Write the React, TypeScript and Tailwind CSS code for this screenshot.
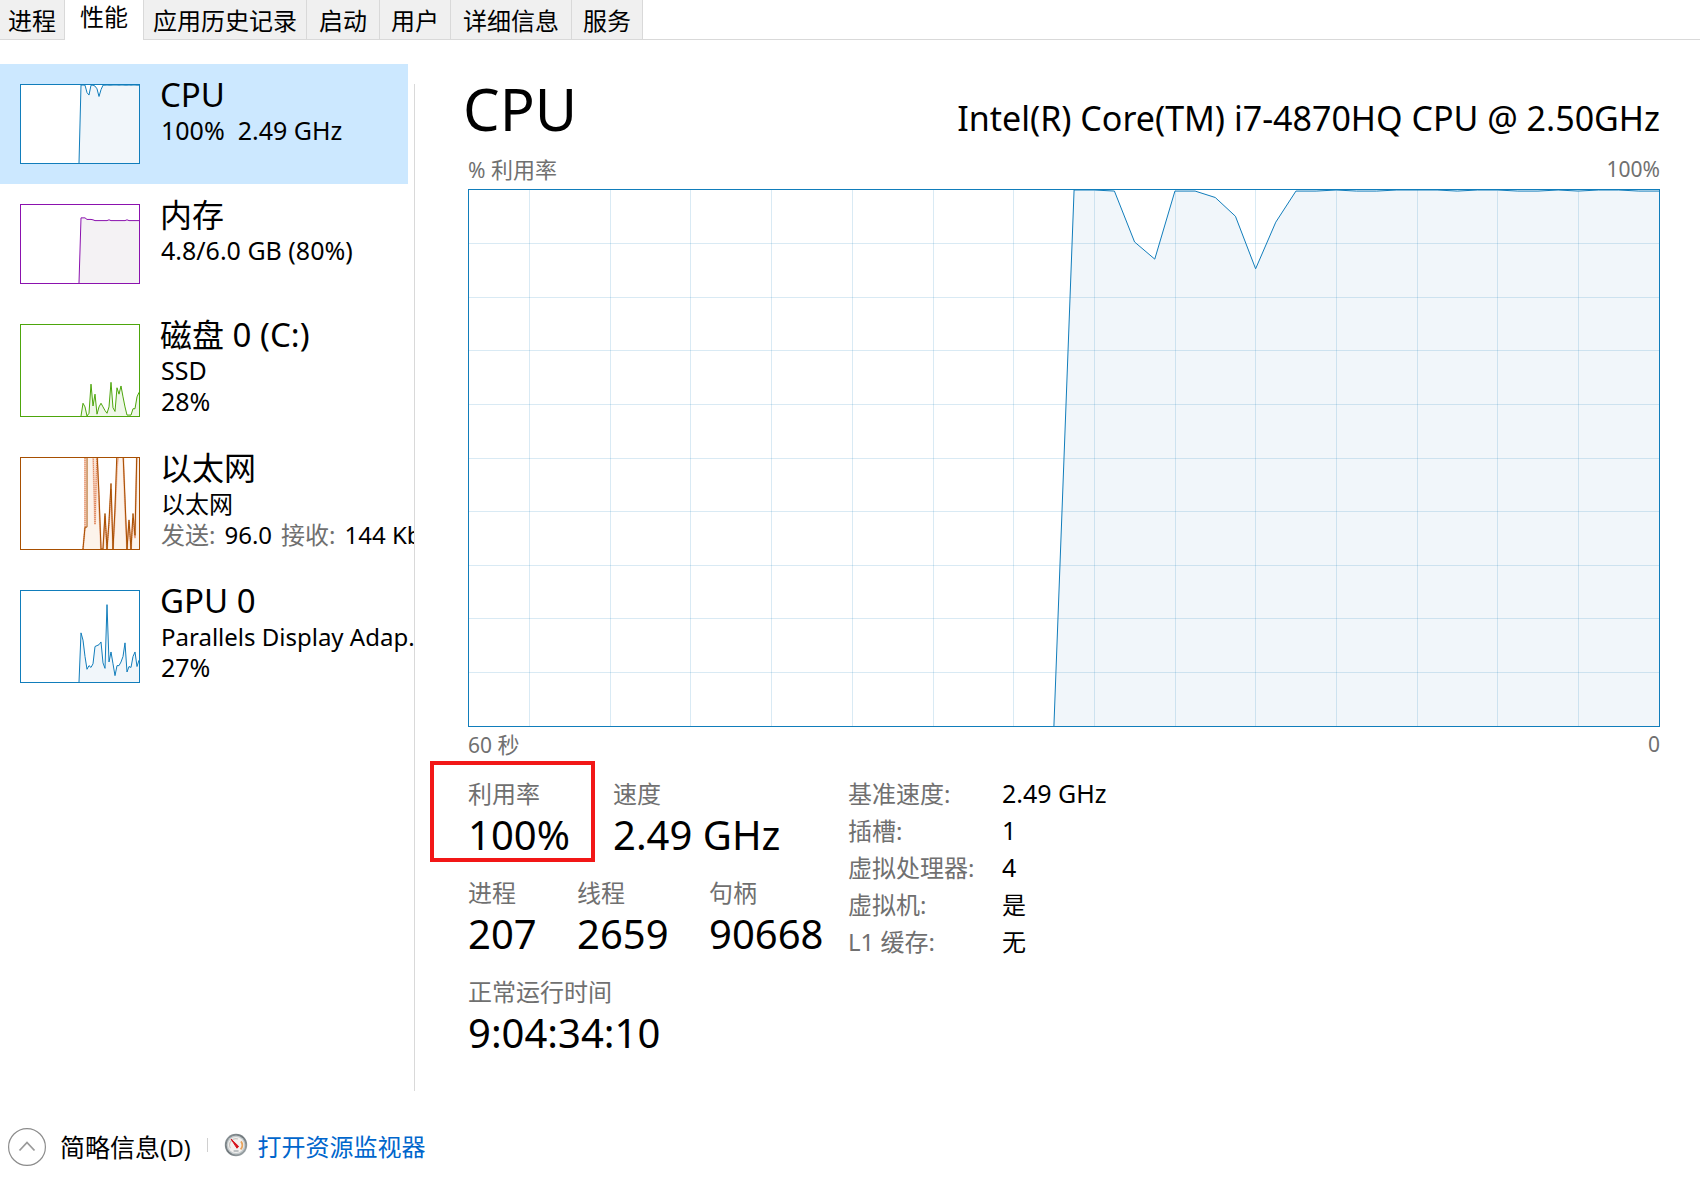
import { clsx } from 'clsx';

const SAMPLES = 60;

interface ThemeColors {
  line: string;
  fill: string;
}

const blue: ThemeColors = { line: '#117dbb', fill: '#f1f6fa' };
const purple: ThemeColors = { line: '#8b12ae', fill: '#f4f2f4' };
const green: ThemeColors = { line: '#4da60c', fill: '#eff7e9' };
const orange: ThemeColors = { line: '#a74f01', fill: '#fcf3eb' };

// Each series holds the newest samples in percent, the last one sits on the right edge
const cpuSeries = [
  0, 100, 100, 99.8, 90.3, 87.1, 99.8, 99.8, 98.6, 95.1, 85.3, 94, 99.8, 99.8, 100, 99.8, 99.8, 100, 100, 100, 99.8,
  100, 100, 99.8, 99.8, 100, 99.8, 100, 100, 99.8, 99.8,
];
const memorySeries = [
  0, 83.5, 83.5, 83.5, 81.5, 81.5, 81.5, 81, 80, 80, 80, 80, 80, 80, 80, 81, 80, 80, 80, 80, 80, 80, 80, 80, 81, 80,
  80, 80, 80, 80, 80,
];
const diskSeries = [
  0, 14, 10, 0, 3, 35, 11, 24, 2, 10, 14, 10, 6, 3, 10, 37, 9, 5, 31, 24, 33, 21, 10, 1, 1, 1, 8, 8, 21, 26,
];
const receiveSeries = [
  0, 24, 24, 9000, 9000, 9000, 130, 106, 60, 0, 0, 39, 0, 30, 72, 0, 45, 110, 130, 130, 106, 55, 0, 32, 0, 39, 15, 115,
  115,
];
const sendSeries = [
  0, 24, 9000, 9000, 130, 110, 27, 110, 50, 0, 0, 36, 0, 28, 66, 0, 40, 90, 110, 130, 110, 48, 0, 30, 0, 34, 12, 110,
  110,
];
const gpuSeries = [
  0, 54, 46, 28, 14, 18, 16, 20, 39, 40, 41, 44, 21, 15, 85, 22, 33, 20, 7, 18, 18, 22, 28, 43, 11, 17, 16, 28, 33, 17,
  24,
];

const tabs = [
  { name: '进程', className: 'border-r px-2' },
  { name: '性能', className: 'px-[15px]' },
  { name: '应用历史记录', className: 'border-x px-[9px]' },
  { name: '启动', className: 'border-r px-3' },
  { name: '用户', className: 'border-r px-[11px]' },
  { name: '详细信息', className: 'border-r px-3' },
  { name: '服务', className: 'border-r px-[11px]' },
];

const details = [
  { label: '基准速度:', value: '2.49 GHz' },
  { label: '插槽:', value: '1' },
  { label: '虚拟处理器:', value: '4' },
  { label: '虚拟机:', value: '是' },
  { label: 'L1 缓存:', value: '无' },
];

function toPoints(series: number[], width: number, height: number) {
  const step = width / (SAMPLES - 1);
  const first = SAMPLES - series.length;
  return series.map((v, i) => `${((first + i) * step).toFixed(2)},${(height - (v / 100) * height).toFixed(2)}`);
}

interface GraphProps {
  series: number[];
  second?: number[];
  colors: ThemeColors;
  width: number;
  height: number;
  grid?: boolean;
}

function Graph({ series, second, colors, width, height, grid }: GraphProps) {
  const points = toPoints(series, width, height);
  const secondPoints = second ? toPoints(second, width, height).join(' ') : '';
  const startX = points[0].split(',')[0];
  const columns = grid ? Array.from({ length: 14 }, (_, i) => Math.round(60 + i * 80.7)) : [];
  const rows = grid ? Array.from({ length: 9 }, (_, i) => Math.floor(((i + 1) * height) / 10)) : [];

  return (
    <svg
      viewBox={`0 0 ${width} ${height}`}
      preserveAspectRatio="none"
      className="block h-full w-full"
      aria-hidden="true"
    >
      <polygon points={`${startX},${height} ${points.join(' ')} ${width},${height}`} fill={colors.fill} />
      <g stroke="#117dbb" strokeOpacity="0.16" shapeRendering="crispEdges">
        {columns.map((x) => (
          <line key={x} x1={x} x2={x} y1={0} y2={height} vectorEffect="non-scaling-stroke" />
        ))}
        {rows.map((y) => (
          <line key={y} x1={0} x2={width} y1={y} y2={y} vectorEffect="non-scaling-stroke" />
        ))}
      </g>
      {second && (
        <g fill="none">
          <polyline points={secondPoints} stroke="#f5cdb8" strokeWidth="2" vectorEffect="non-scaling-stroke" />
          <polyline points={secondPoints} stroke="#dd7a4c" strokeDasharray="1 1" vectorEffect="non-scaling-stroke" />
        </g>
      )}
      <polyline points={points.join(' ')} fill="none" stroke={colors.line} vectorEffect="non-scaling-stroke" />
    </svg>
  );
}

// Latin runs are sized apart from the Chinese ones next to them
function Mixed({ text, latin }: { text: string; latin: string }) {
  return (
    <>
      {text.split(/([\x20-\x7e\xa0]+)/).map((part, i) =>
        i % 2 === 1 ? (
          <span key={i} className={clsx('leading-none', latin)}>
            {part}
          </span>
        ) : (
          part
        )
      )}
    </>
  );
}

interface DeviceProps {
  title: string;
  lines: React.ReactNode[];
  series: number[];
  second?: number[];
  colors: ThemeColors;
  frame: string;
  selected?: boolean;
}

function Device({ title, lines, series, second, colors, frame, selected }: DeviceProps) {
  return (
    <button
      type="button"
      className={clsx('flex w-full items-start overflow-hidden py-5 pl-5 text-left', selected && 'bg-[#cce8ff]')}
    >
      <div className={clsx('w-[120px] shrink-0 border bg-white', frame)}>
        <Graph series={series} second={second} colors={colors} width={118} height={lines.length > 1 ? 91 : 78} />
      </div>
      <div className="-mt-[9px] -mb-4 ml-5 whitespace-nowrap">
        <div className="text-[32px] leading-[40px]">
          <Mixed text={title} latin="text-[33px]" />
        </div>
        {lines.map((line, i) => (
          <div key={i} className="pl-px text-[24px] leading-[31px]">
            {line}
          </div>
        ))}
      </div>
    </button>
  );
}

function Stat({ label, value, className }: { label: string; value: string; className?: string }) {
  return (
    <div className={className}>
      <dt className="text-[24px] leading-[32px] text-[#707070]">{label}</dt>
      <dd className="text-[40px] leading-[50px]">{value}</dd>
    </div>
  );
}

function GaugeIcon() {
  return (
    <svg viewBox="0 0 24 24" className="mb-1 h-6 w-6" aria-hidden="true">
      <defs>
        <linearGradient id="rim" x1="0" y1="0" x2="1" y2="1">
          <stop offset="0" stopColor="#8d9599" />
          <stop offset="0.5" stopColor="#6f777b" />
          <stop offset="1" stopColor="#a9b1b4" />
        </linearGradient>
      </defs>
      <circle cx="12" cy="12" r="11.2" fill="url(#rim)" />
      <circle cx="12" cy="12" r="9.4" fill="#c5cbcd" />
      <circle cx="12" cy="12" r="8" fill="#f3f1ef" />
      <path d="M6.4 15.2A6.4 6.4 0 0 1 14 6" fill="none" stroke="#c9c4c0" strokeWidth="1.2" />
      <path d="M17 8.4A6.4 6.4 0 0 1 16.6 16.4" fill="none" stroke="#e8a35c" strokeWidth="1.8" />
      <path d="M7 6L14.6 13.4L13 15.2Z" fill="#d8141c" stroke="#d8141c" strokeWidth="1" strokeLinejoin="round" />
      <path d="M9.6 18h5" stroke="#9aa2a6" strokeWidth="1.2" />
    </svg>
  );
}

export default function App() {
  return (
    <div className="flex min-h-screen flex-col bg-white font-['Noto_Sans','Noto_Sans_CJK_SC',sans-serif] text-black">
      <nav className="flex h-10 items-stretch" role="tablist">
        {tabs.map(({ name, className }) => {
          const active = name === '性能';
          return (
            <button
              key={name}
              type="button"
              role="tab"
              aria-selected={active}
              className={clsx(
                'text-[24px] leading-[24px]',
                active ? 'bg-white pb-1.5' : 'border-b border-[#d9d9d9] bg-[#f0f0f0] pt-0.5',
                className
              )}
            >
              {name}
            </button>
          );
        })}
        <div className="flex-1 border-b border-[#d9d9d9]" />
      </nav>

      <div className="flex flex-1">
        <aside className="w-[414px] shrink-0 overflow-hidden pt-6">
          <div className="pr-[6px]">
            <Device
              title="CPU"
              selected
              lines={[<Mixed text={'100%\u00a0 2.49 GHz'} latin="text-[25px]" />]}
              series={cpuSeries}
              colors={blue}
              frame="h-20 border-[#117dbb]"
            />
          </div>
          <Device
            title="内存"
            lines={[<Mixed text="4.8/6.0 GB (80%)" latin="text-[25px]" />]}
            series={memorySeries}
            colors={purple}
            frame="h-20 border-[#8b12ae]"
          />
          <Device
            title="磁盘 0 (C:)"
            lines={[<Mixed text="SSD" latin="text-[25px]" />, <Mixed text="28%" latin="text-[25px]" />]}
            series={diskSeries}
            colors={green}
            frame="h-[93px] border-[#4da60c]"
          />
          <Device
            title="以太网"
            lines={[
              '以太网',
              <span className="flex gap-[9px]">
                <span className="text-[#707070]">发送:</span>
                <span>96.0</span>
                <span className="text-[#707070]">接收:</span>
                <span>144 Kbps</span>
              </span>,
            ]}
            series={receiveSeries}
            second={sendSeries}
            colors={orange}
            frame="h-[93px] border-[#a74f01]"
          />
          <Device
            title="GPU 0"
            lines={['Parallels Display Adap...', <Mixed text="27%" latin="text-[25px]" />]}
            series={gpuSeries}
            colors={blue}
            frame="h-[93px] border-[#117dbb]"
          />
        </aside>

        <main className="mt-11 min-w-0 flex-1 border-l border-[#d9d9d9] pr-10 pl-[53px]">
          <header className="flex h-[69px] items-baseline justify-between">
            <h1 className="-ml-[5px] text-[58px] leading-[50px]">CPU</h1>
            <p className="text-[34px] leading-[40px]">Intel(R) Core(TM) i7-4870HQ CPU @ 2.50GHz</p>
          </header>
          <div className="flex justify-between pb-1 text-[22px] leading-[32px] text-[#707070]">
            <span>
              <Mixed text="% 利用率" latin="text-[21px]" />
            </span>
            <span className="text-[21px]">100%</span>
          </div>
          <div className="h-[538px] border border-[#117dbb]">
            <Graph series={cpuSeries} colors={blue} width={1190} height={536} grid />
          </div>
          <div className="flex justify-between pt-[3px] text-[22px] leading-[28px] text-[#707070]">
            <span>
              <Mixed text="60 秒" latin="text-[21px]" />
            </span>
            <span className="text-[21px]">0</span>
          </div>

          <div className="flex pt-5">
            <dl className="flex w-[380px] shrink-0 flex-col gap-[17px]">
              <div className="flex">
                <div className="relative w-[145px]">
                  <Stat label="利用率" value="100%" />
                  <div className="pointer-events-none absolute -top-[17px] -left-[38px] h-[101px] w-[165px] border-4 border-[#f21717]" />
                </div>
                <Stat label="速度" value="2.49 GHz" />
              </div>
              <div className="flex">
                <Stat label="进程" value="207" className="w-[109px]" />
                <Stat label="线程" value="2659" className="w-[132px]" />
                <Stat label="句柄" value="90668" />
              </div>
              <Stat label="正常运行时间" value="9:04:34:10" />
            </dl>
            <dl className="-mt-[3px] text-[24px] leading-[37px]">
              {details.map(({ label, value }) => (
                <div key={label} className="flex">
                  <dt className="w-[154px] text-[#707070]">{label}</dt>
                  <dd>
                    <Mixed text={value} latin="text-[25px]" />
                  </dd>
                </div>
              ))}
            </dl>
          </div>
        </main>
      </div>

      <footer className="flex h-[101px] items-center pt-[11px] pl-2 text-[24px] leading-[32px]">
        <button type="button" className="flex items-center gap-[14px] text-[25px]">
          <svg viewBox="0 0 38 38" className="h-[38px] w-[38px]" fill="none" aria-hidden="true">
            <circle cx="19" cy="19" r="18.4" stroke="#8c8c8c" strokeWidth="1.2" />
            <path d="M11.5 22.5L19 14.5L26.5 22.5" stroke="#9a9a9a" strokeWidth="1.8" />
          </svg>
          <span>
            <Mixed text="简略信息(D)" latin="text-[23px]" />
          </span>
        </button>
        <div className="mx-4 mb-1 h-[14px] w-px bg-[#d0d0d0]" />
        <a href="#resmon" className="flex items-center gap-[10px] text-[#0066cc]">
          <GaugeIcon />
          打开资源监视器
        </a>
      </footer>
    </div>
  );
}
